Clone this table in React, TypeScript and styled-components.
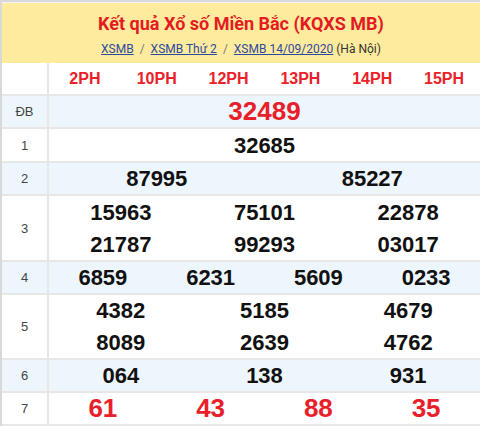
import React from "react";
import styled, { createGlobalStyle } from "styled-components";

const Global = createGlobalStyle`
  html, body { margin: 0; padding: 0; background: #fff; }
  body { font-family: "Liberation Sans", Arial, sans-serif; }
`;

const Frame = styled.div`
  width: 480px;
  box-sizing: border-box;
  border-top: 2px solid #d9d9d9;
  border-left: 2px solid #d9d9d9;
  overflow: hidden;
`;

const Header = styled.div`
  background: #ffeb9d;
  border-top: 1px solid #f4f4f4;
  height: 61px;
  display: flex;
  flex-direction: column;
  align-items: center;
  box-sizing: border-box;
  padding-top: 10px;
`;

const Title = styled.h1`
  margin: 0;
  font-family: Roboto, "Liberation Sans", sans-serif;
  font-weight: 700;
  font-size: 18px;
  line-height: 22px;
  color: #e31b23;
`;

const Crumbs = styled.div`
  margin-top: 6px;
  font-family: Roboto, "Liberation Sans", sans-serif;
  font-size: 12px;
  line-height: 16px;
  color: #333;
  display: flex;
`;

const Crumb = styled.a`
  color: #2d4a9f;
  text-decoration: underline;
`;

const Sep = styled.span`
  color: #777;
  margin: 0 6px;
`;

const Place = styled.span`
  color: #333;
  margin-left: 3px;
`;

const Row = styled.div<{ $bg?: string; $h?: number }>`
  display: grid;
  grid-template-columns: 47px 1fr;
  height: ${(p) => p.$h ?? 31}px;
  background: ${(p) => p.$bg ?? "#fff"};
  border-bottom: 2px solid #e7e7e7;
`;

const Label = styled.div`
  border-right: 2px solid #e7e7e7;
  display: flex;
  align-items: center;
  justify-content: center;
  font-family: "Liberation Sans", Arial, sans-serif;
  font-size: 13px;
  color: #444;
`;

const Cells = styled.div<{ $cols: number }>`
  display: grid;
  grid-template-columns: repeat(${(p) => p.$cols}, 1fr);
  grid-auto-rows: 1fr;
  align-items: center;
`;

const Num = styled.div<{ $red?: boolean; $big?: boolean }>`
  text-align: center;
  font-family: "Liberation Sans", Arial, sans-serif;
  font-weight: 700;
  font-size: ${(p) => (p.$big ? 26 : 22)}px;
  line-height: 31px;
  color: ${(p) => (p.$red ? "#e8202a" : "#111")};
`;

const Head = styled.div`
  text-align: center;
  font-family: "Liberation Sans", Arial, sans-serif;
  font-weight: 700;
  font-size: 16px;
  color: #ea2129;
`;

const BLUE = "#eef6fd";

type Prize = { label: string; cols: number; nums: string[]; bg?: string; red?: boolean; big?: boolean; h?: number };

const prizes: Prize[] = [
  { label: "ĐB", cols: 1, nums: ["32489"], bg: BLUE, red: true, big: true },
  { label: "1", cols: 1, nums: ["32685"], h: 32 },
  { label: "2", cols: 2, nums: ["87995", "85227"], bg: BLUE },
  { label: "3", cols: 3, nums: ["15963", "75101", "22878", "21787", "99293", "03017"], h: 64 },
  { label: "4", cols: 4, nums: ["6859", "6231", "5609", "0233"], bg: BLUE },
  { label: "5", cols: 3, nums: ["4382", "5185", "4679", "8089", "2639", "4762"], h: 63 },
  { label: "6", cols: 3, nums: ["064", "138", "931"], bg: BLUE },
  { label: "7", cols: 4, nums: ["61", "43", "88", "35"], red: true, big: true },
];

const heads = ["2PH", "10PH", "12PH", "13PH", "14PH", "15PH"];

export default function App() {
  return (
    <>
      <Global />
      <Frame>
        <Header>
          <Title>Kết quả Xổ số Miền Bắc (KQXS MB)</Title>
          <Crumbs>
            <Crumb href="#">XSMB</Crumb>
            <Sep>/</Sep>
            <Crumb href="#">XSMB Thứ 2</Crumb>
            <Sep>/</Sep>
            <Crumb href="#">XSMB 14/09/2020</Crumb>
            <Place>(Hà Nội)</Place>
          </Crumbs>
        </Header>
        <Row>
          <Label />
          <Cells $cols={6}>
            {heads.map((h) => (
              <Head key={h}>{h}</Head>
            ))}
          </Cells>
        </Row>
        {prizes.map((p) => (
          <Row key={p.label} $bg={p.bg} $h={p.h}>
            <Label>{p.label}</Label>
            <Cells $cols={p.cols}>
              {p.nums.map((n, i) => (
                <Num key={i} $red={p.red} $big={p.big}>
                  {n}
                </Num>
              ))}
            </Cells>
          </Row>
        ))}
      </Frame>
    </>
  );
}
